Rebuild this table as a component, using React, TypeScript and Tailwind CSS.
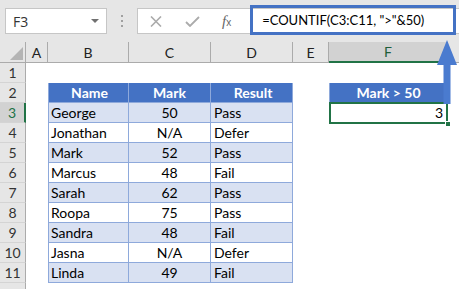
import React from 'react';

const COLS = [
  { key: 'A', w: 'w-[22px]' },
  { key: 'B', w: 'w-[81px]' },
  { key: 'C', w: 'w-[82px]' },
  { key: 'D', w: 'w-[82px]' },
  { key: 'E', w: 'w-[36px]' },
  { key: 'F', w: 'w-[118px]' },
];

type Row = { n: number; name?: string; mark?: string; result?: string };

const ROWS: Row[] = [
  { n: 1 },
  { n: 2 },
  { n: 3, name: 'George', mark: '50', result: 'Pass' },
  { n: 4, name: 'Jonathan', mark: 'N/A', result: 'Defer' },
  { n: 5, name: 'Mark', mark: '52', result: 'Pass' },
  { n: 6, name: 'Marcus', mark: '48', result: 'Fail' },
  { n: 7, name: 'Sarah', mark: '62', result: 'Pass' },
  { n: 8, name: 'Roopa', mark: '75', result: 'Pass' },
  { n: 9, name: 'Sandra', mark: '48', result: 'Fail' },
  { n: 10, name: 'Jasna', mark: 'N/A', result: 'Defer' },
  { n: 11, name: 'Linda', mark: '49', result: 'Fail' },
  { n: 12 },
];

const FormulaBar: React.FC = () => (
  <div className="h-[42px] bg-[#E6E6E6] flex items-start pt-[8px]">
    <div className="ml-[5px] w-[102px] h-[26px] bg-white border border-[#C6C6C6] flex items-center justify-between pl-[7px] pr-[7px]">
      <span className="text-[14px] text-[#333] font-['Open_Sans',sans-serif]">F3</span>
      <span className="w-0 h-0 border-l-[4px] border-r-[4px] border-t-[4px] border-l-transparent border-r-transparent border-t-[#707070]" />
    </div>
    <div className="w-[30px] h-[26px] flex flex-col items-center justify-center gap-[3px]">
      <span className="w-[2px] h-[2px] bg-[#A0A0A0]" />
      <span className="w-[2px] h-[2px] bg-[#A0A0A0]" />
      <span className="w-[2px] h-[2px] bg-[#A0A0A0]" />
    </div>
    <div className="flex-1 h-[26px] bg-white border border-[#C6C6C6] border-r-0 flex items-center">
      <svg className="ml-[12px]" width="12" height="11" viewBox="0 0 12 11">
        <path d="M1 0.5 L11 10.5 M11 0.5 L1 10.5" stroke="#ABABAB" strokeWidth="1.6" />
      </svg>
      <svg className="ml-[23px]" width="15" height="11" viewBox="0 0 15 11">
        <path d="M1 6 L5 10 L14 1" stroke="#ABABAB" strokeWidth="1.8" fill="none" />
      </svg>
      <span className="ml-[22px] text-[15px] italic text-[#666] font-['Liberation_Serif',serif] leading-none">
        f<span className="text-[10px] not-italic font-['Liberation_Sans',sans-serif]">x</span>
      </span>
      <span className="ml-[31px] text-[13px] text-black whitespace-pre">{'=COUNTIF(C3:C11, ">"&50)'}</span>
    </div>
  </div>
);

const ColumnHeaders: React.FC = () => (
  <div className="h-[21px] flex bg-[#E6E6E6] border-b border-[#ABABAB]">
    <div className="w-[26px] border-r border-[#ABABAB] relative">
      <svg className="absolute left-[10px] top-[5px]" width="13" height="13" viewBox="0 0 13 13">
        <path d="M13 0 L13 13 L0 13 Z" fill="#B4B4B4" />
      </svg>
    </div>
    {COLS.map((c) =>
      c.key === 'F' ? (
        <div
          key={c.key}
          className={`${c.w} bg-[#D2D2D2] border-b-2 border-[#217346] mb-[-1px] flex items-center justify-center text-[14px] text-[#1E5E3A]`}
        >
          {c.key}
        </div>
      ) : (
        <div
          key={c.key}
          className={`${c.w} border-r border-[#ABABAB] flex items-center justify-center text-[14px] text-[#222]`}
        >
          {c.key}
        </div>
      )
    )}
    <div className="flex-1 border-l border-[#ABABAB]" />
  </div>
);

const BodyRow: React.FC<{ row: Row }> = ({ row }) => {
  const isHeader = row.n === 2;
  const inTable = row.n >= 2 && row.n <= 11;
  const shaded = row.n % 2 === 1;
  const cellBg = isHeader ? 'bg-[#4472C4]' : shaded ? 'bg-[#D9E1F2]' : 'bg-white';
  const selected = row.n === 3;

  return (
    <div className="h-[20px] flex leading-[19px] text-[14px]">
      <div
        className={
          selected
            ? 'w-[26px] bg-[#D2D2D2] border-r-2 border-r-[#217346] border-b border-b-[#D4D4D4] text-center text-[#217346]'
            : 'w-[26px] bg-[#E6E6E6] border-r border-r-[#ABABAB] border-b border-b-[#D4D4D4] text-center text-[#333]'
        }
      >
        {row.n <= 11 ? row.n : null}
      </div>
      <div className="w-[22px]" />
      {inTable ? (
        <>
          <div className={`w-[81px] ${cellBg} border-l border-r border-b border-[#8EA9DB] pl-[2px] ${isHeader ? 'text-center font-bold text-white' : 'text-black'}`}>
            {isHeader ? 'Name' : row.name}
          </div>
          <div className={`w-[82px] ${cellBg} border-r border-b border-[#8EA9DB] text-center ${isHeader ? 'font-bold text-white' : 'text-black'}`}>
            {isHeader ? 'Mark' : row.mark}
          </div>
          <div className={`w-[82px] ${cellBg} border-r border-b border-[#8EA9DB] pl-[3px] ${isHeader ? 'text-center font-bold text-white' : 'text-black'}`}>
            {isHeader ? 'Result' : row.result}
          </div>
        </>
      ) : (
        <div className="w-[245px]" />
      )}
      <div className="w-[36px]" />
      {row.n === 2 && (
        <div className="w-[118px] bg-[#4472C4] border-l border-b border-[#8EA9DB] text-center font-bold text-white">
          Mark &gt; 50
        </div>
      )}
      {row.n === 3 && (
        <div className="w-[118px] relative text-right pr-[4px] text-black">
          3
          <div className="absolute -top-px left-0 -right-px -bottom-px border-2 border-[#217346]" />
          <div className="absolute right-[-4px] bottom-[-4px] w-[6px] h-[6px] bg-[#217346] border border-white" />
        </div>
      )}
    </div>
  );
};

const App: React.FC = () => {
  return (
    <div className="relative w-[459px] h-[289px] overflow-hidden bg-white font-['Lato',sans-serif]">
      <FormulaBar />
      <ColumnHeaders />
      {ROWS.map((r) => (
        <BodyRow key={r.n} row={r} />
      ))}

      {/* highlight around formula */}
      <div className="absolute left-[250px] top-[5px] w-[206px] h-[30px] border-[3px] border-[#4472C4]" />
      {/* arrow pointing up from the result */}
      <svg className="absolute left-[436px] top-[39px]" width="22" height="66" viewBox="0 0 22 66">
        <path d="M11 1 L21 26 L14.5 26 L14.5 65 L7.5 65 L7.5 26 L1 26 Z" fill="#4A7BCF" />
      </svg>
    </div>
  );
};

export default App;
